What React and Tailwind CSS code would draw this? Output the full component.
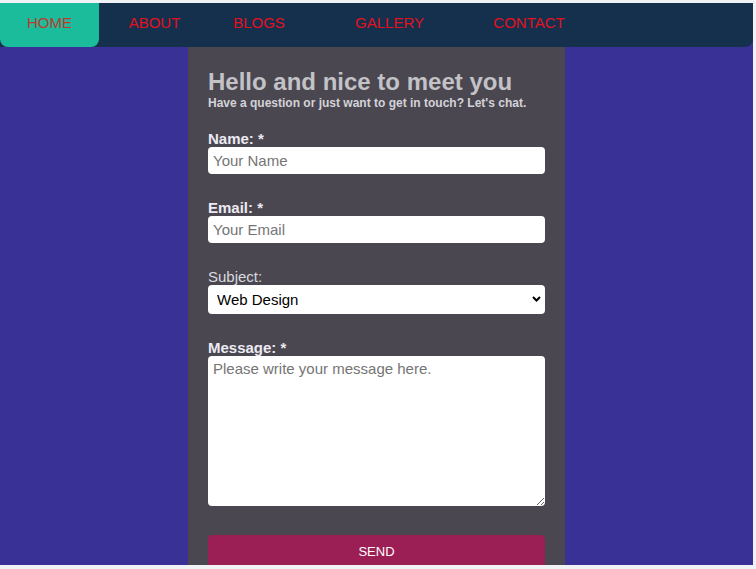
import React from "react";

const navItems = [
  { label: "HOME", width: "w-[99px]", active: true },
  { label: "ABOUT", width: "w-[111px]" },
  { label: "BLOGS", width: "w-[98px]" },
  { label: "GALLERY", width: "w-[163px]" },
  { label: "CONTACT", width: "w-[116px]" },
];

const Nav = () => (
  <nav className="flex h-[44px] w-full shrink-0 rounded-br-lg bg-[#15304d]">
    {navItems.map((item) => (
      <a
        key={item.label}
        href="#"
        className={`${item.width} h-full pt-[11px] text-center text-[15px] leading-[17px] ${
          item.active
            ? "rounded-b-lg bg-[#1abc9c] text-[#c0392b]"
            : "text-[#e3101f]"
        }`}
      >
        {item.label}
      </a>
    ))}
  </nav>
);

const App = () => {
  return (
    <div
      className="h-[569px] w-[756px] overflow-hidden bg-[#f0f2f5] pt-[3px]"
      style={{ fontFamily: '"Liberation Sans", Arial, sans-serif' }}
    >
      <div className="flex h-[562px] w-[753px] flex-col overflow-hidden bg-[#3a3197]">
        <Nav />

        {/* Contact card */}
        <div className="mx-auto w-[377px] shrink-0 bg-[#4a4751] px-5 pt-[21px] pb-[20px]">
          <h2 className="text-[24px] font-bold leading-[28px] text-[#c3c2c7]">
            Hello and nice to meet you
          </h2>
          <p className="text-[12px] font-bold leading-[14px] text-[#d4d3d8]">
            Have a question or just want to get in touch? Let's chat.
          </p>

          <form className="mt-[20px] flex flex-col">
            <label className="block text-[15px] font-bold leading-[17px] text-[#eceaf2]">
              Name: *
            </label>
            <input
              type="text"
              placeholder="Your Name"
              className="block h-[27px] w-full rounded bg-white px-[5px] text-[15px] leading-[17px] text-black outline-none placeholder:text-[#757575]"
            />

            <label className="mt-[25px] block text-[15px] font-bold leading-[17px] text-[#eceaf2]">
              Email: *
            </label>
            <input
              type="email"
              placeholder="Your Email"
              className="block h-[27px] w-full rounded bg-white px-[5px] text-[15px] leading-[17px] text-black outline-none placeholder:text-[#757575]"
            />

            <label className="mt-[25px] block text-[15px] leading-[17px] text-[#d9d8de]">
              Subject:
            </label>
            <div className="relative">
              <select
                defaultValue="web"
                className="block h-[29px] w-full appearance-none rounded bg-white pl-[9px] text-[15px] leading-[17px] text-black outline-none"
              >
                <option value="web">Web Design</option>
                <option value="graphic">Graphic Design</option>
                <option value="other">Other</option>
              </select>
              <svg
                className="pointer-events-none absolute right-[4px] top-[11px] h-[6px] w-[9px]"
                viewBox="0 0 9 6"
                fill="none"
              >
                <path d="M1 1l3.5 3.5L8 1" stroke="#000" strokeWidth="2" />
              </svg>
            </div>

            <label className="mt-[25px] block text-[15px] font-bold leading-[17px] text-[#eceaf2]">
              Message: *
            </label>
            <textarea
              placeholder="Please write your message here."
              className="block h-[150px] w-full rounded bg-white px-[5px] py-[4px] text-[15px] leading-[17px] text-black outline-none placeholder:text-[#757575]"
            />

            <button
              type="button"
              className="mt-[29px] h-[34px] w-full rounded bg-[#9b1e54] text-[13px] text-white"
            >
              SEND
            </button>
          </form>
        </div>
      </div>
    </div>
  );
};

export default App;
